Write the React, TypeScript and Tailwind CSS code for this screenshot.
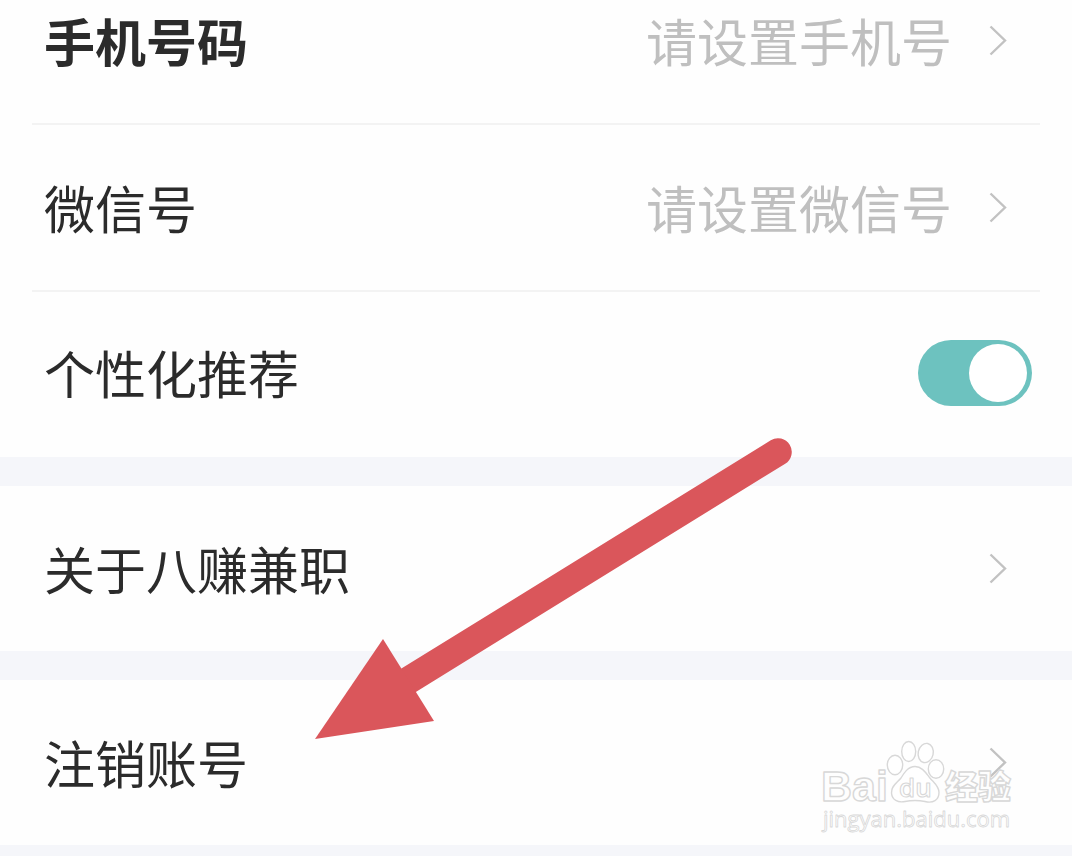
import { useState } from "react";
import type { ReactNode } from "react";

function Chevron() {
  return (
    <svg className="h-8 w-5 shrink-0" viewBox="0 0 20 32" fill="none" stroke="#c2c2c2" strokeWidth="2.4" aria-hidden="true">
      <path d="M2.5 1.5 L17 15.5 L2.5 29.5" />
    </svg>
  );
}

function LinkRow({ label, value, bold }: { label: string; value?: string; bold?: boolean }) {
  return (
    <button type="button" className="flex h-[165px] w-full items-center justify-between pr-16 pl-11 text-left">
      <span className={bold ? "pb-0.5 font-bold" : "pb-0.5 font-normal"}>{label}</span>
      <span className="flex items-center gap-9">
        {value && <span className="pb-0.5 text-[#bfbfbf]">{value}</span>}
        <Chevron />
      </span>
    </button>
  );
}

function Group({ children }: { children: ReactNode }) {
  return <section className="bg-[#fefefe]">{children}</section>;
}

function Divider() {
  return <hr className="mr-8 ml-8 border-t-2 border-[#f3f3f3]" />;
}

function Arrow() {
  return (
    <svg
      className="pointer-events-none absolute top-[436px] left-[312px] h-[308px] w-[484px]"
      viewBox="312 436 484 308"
      aria-hidden="true"
    >
      <path d="M409 680 L778 452" stroke="#da565b" strokeWidth="27.5" strokeLinecap="round" />
      <path d="M315 739 L383 639 L434 721 Z" fill="#da565b" />
    </svg>
  );
}

function Watermark() {
  return (
    <svg
      className="pointer-events-none absolute right-[52px] bottom-5 h-[100px] w-[204px]"
      viewBox="816 736 204 100"
      fill="#ffffff"
      fillOpacity="0.7"
      stroke="#d8d8d8"
      strokeWidth="1.4"
      strokeLinejoin="round"
      role="img"
      aria-label="Baidu 经验"
    >
      <text x="821" y="801" fontSize="43" fontWeight="700" fontFamily="'Liberation Sans', sans-serif">Bai</text>
      <ellipse cx="895" cy="765" rx="7.7" ry="9.7" />
      <ellipse cx="908.7" cy="751.5" rx="7" ry="10" />
      <ellipse cx="925.7" cy="753" rx="7.5" ry="9.7" transform="rotate(12 925.7 753)" />
      <ellipse cx="936" cy="769" rx="7.7" ry="9.3" />
      <path d="M915 766.5 C908 766.5 904 773 901 778 C897 783 891 786 891.5 793 C892 800 898 803 905 801.5 C912 800 918 800 925 801.5 C933 803.5 939 800 939 792.5 C939 786 934 783 929.5 777.5 C926 773 922 766.5 915 766.5 Z" />
      <text x="899" y="797" fontSize="26" fontWeight="600" strokeWidth="1.1" fontFamily="'Open Sans', sans-serif">du</text>
      <text x="945" y="799" fontSize="33" fontWeight="900" fontFamily="'Noto Sans CJK SC', sans-serif">经验</text>
      <text x="823" y="827" fontSize="22" strokeWidth="0.8" fontFamily="'Open Sans', sans-serif">jingyan.baidu.com</text>
    </svg>
  );
}

export default function App() {
  const [recommend, setRecommend] = useState(true);

  return (
    <main className="relative flex min-h-screen flex-col gap-[29px] overflow-hidden bg-[#f5f6fa] font-['Noto_Sans_CJK_SC',sans-serif] text-[51px] leading-[76px] text-[#2b2b2b]">
      <Group>
        <div className="-mt-[42px]">
          <LinkRow label="手机号码" value="请设置手机号" bold />
        </div>
        <Divider />
        <LinkRow label="微信号" value="请设置微信号" />
        <Divider />
        <label className="flex h-[165px] items-center justify-between pr-10 pb-1 pl-11">
          <span className="pb-0.5">个性化推荐</span>
          <input
            type="checkbox"
            role="switch"
            checked={recommend}
            onChange={(e) => setRecommend(e.target.checked)}
            className="flex h-[66px] w-[114px] shrink-0 appearance-none items-center rounded-full bg-[#d5d5d5] px-[5px] before:block before:size-[58px] before:rounded-full before:bg-white before:content-[''] checked:justify-end checked:bg-[#6dc2bf]"
          />
        </label>
      </Group>
      <Group>
        <LinkRow label="关于八赚兼职" />
      </Group>
      <Group>
        <LinkRow label="注销账号" />
      </Group>
      <Arrow />
      <Watermark />
    </main>
  );
}
